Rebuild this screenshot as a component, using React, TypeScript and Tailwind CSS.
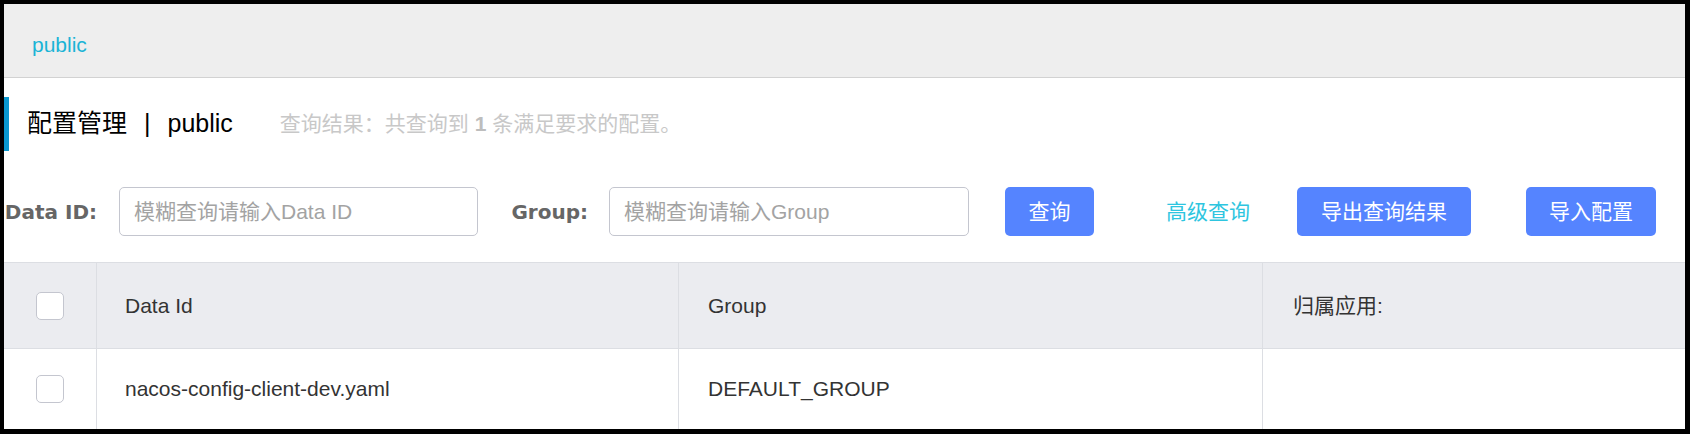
export default function App() {
  const inputCls =
    "h-[49px] rounded-[5px] border border-[#c4c6cf] bg-white px-[14px] text-[21px] text-[#333] placeholder:text-[#a3a3a3] outline-none";
  const btnCls =
    "h-[49px] rounded-[5px] bg-[#5584ff] text-[21px] text-white flex items-center justify-center";
  const labelCls =
    "text-right text-[20px] font-bold text-[#666] font-['DejaVu_Sans','Noto_Sans_CJK_SC',sans-serif]";

  return (
    <div className="w-[1690px] h-[434px] bg-black pl-[4px] pt-[4px] pr-[5px] pb-[5px] font-['Liberation_Sans','Noto_Sans_CJK_SC',sans-serif]">
      <div className="h-full bg-white flex flex-col">
        {/* namespace bar */}
        <div className="h-[74px] shrink-0 bg-[#eeeeee] border-b border-[#d2d2d2] flex items-center pl-[28px] pt-[8px]">
          <span className="text-[21px] text-[#1bb4d6]">public</span>
        </div>

        {/* title */}
        <div className="mt-[19px] h-[54px] shrink-0 border-l-[5px] border-[#0a98cf] flex items-center pl-[18px]">
          <span className="text-[25px] text-black">配置管理</span>
          <span className="text-[25px] text-black mx-[17px]">|</span>
          <span className="text-[25px] text-black">public</span>
          <span className="ml-[47px] text-[21px] text-[#c8c8c8]">
            查询结果：共查询到 <b className="font-bold text-[#bdbdbd]">1</b> 条满足要求的配置。
          </span>
        </div>

        {/* search row */}
        <div className="mt-[36px] h-[49px] shrink-0 flex items-center">
          <label className={`${labelCls} w-[93px] whitespace-nowrap`}>Data ID:</label>
          <input className={`${inputCls} ml-[22px] w-[359px]`} placeholder="模糊查询请输入Data ID" />
          <label className={`${labelCls} w-[110px] whitespace-nowrap`}>Group:</label>
          <input className={`${inputCls} ml-[21px] w-[360px]`} placeholder="模糊查询请输入Group" />
          <button className={`${btnCls} ml-[36px] w-[89px]`}>查询</button>
          <a className="ml-[72px] w-[87px] text-[21px] text-[#2ec5df] whitespace-nowrap">高级查询</a>
          <button className={`${btnCls} ml-[44px] w-[174px]`}>导出查询结果</button>
          <button className={`${btnCls} ml-[55px] w-[130px]`}>导入配置</button>
        </div>

        {/* table */}
        <div className="mt-[26px] border-t border-[#dcdee3] text-[21px] text-[#333]">
          <div className="h-[86px] flex bg-[#ebecf0] border-b border-[#dcdee3]">
            <div className="w-[93px] border-r border-[#dcdee3] flex items-center justify-center">
              <span className="w-[28px] h-[28px] rounded-[5px] border border-[#c4c6cf] bg-white" />
            </div>
            <div className="w-[582px] border-r border-[#dcdee3] flex items-center pl-[28px]">Data Id</div>
            <div className="w-[584px] border-r border-[#dcdee3] flex items-center pl-[29px]">Group</div>
            <div className="flex-1 flex items-center pl-[30px]">归属应用:</div>
          </div>
          <div className="h-[80px] flex bg-white">
            <div className="w-[93px] border-r border-[#dcdee3] flex items-center justify-center">
              <span className="w-[28px] h-[28px] rounded-[5px] border border-[#c4c6cf] bg-white" />
            </div>
            <div className="w-[582px] border-r border-[#dcdee3] flex items-center pl-[28px]">
              nacos-config-client-dev.yaml
            </div>
            <div className="w-[584px] border-r border-[#dcdee3] flex items-center pl-[29px]">DEFAULT_GROUP</div>
            <div className="flex-1" />
          </div>
        </div>
      </div>
    </div>
  );
}
